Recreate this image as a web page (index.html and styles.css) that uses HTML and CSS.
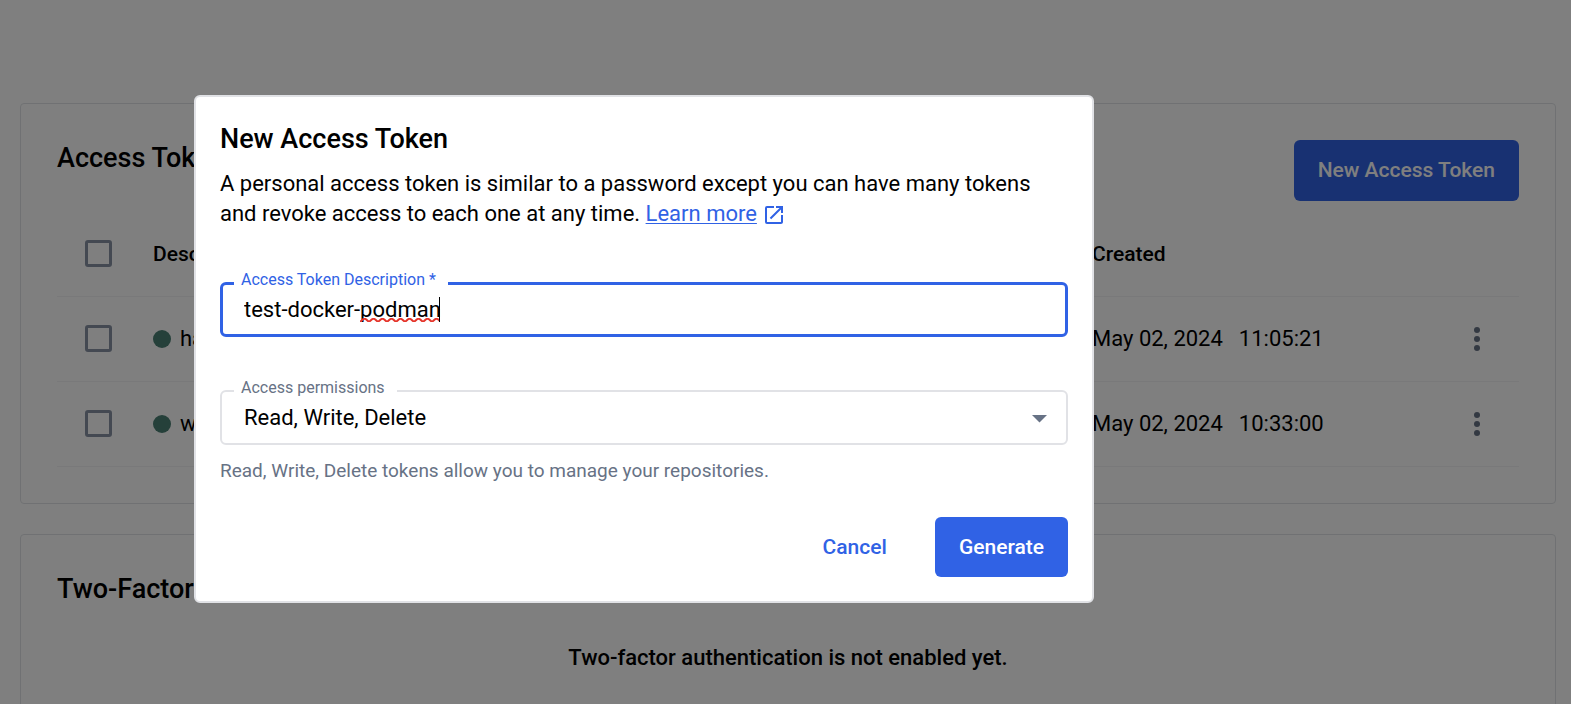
FILE: index.html
```
<!DOCTYPE html>
<html lang="en">
<head>
<meta charset="utf-8">
<title>Access Tokens</title>
<link rel="stylesheet" href="styles.css">
</head>
<body>
<main class="page">
  <section class="card">
    <header class="card-header">
      <h2 class="title">Access Tokens</h2>
      <button class="button button-primary button-new" type="button">New Access Token</button>
    </header>
    <table class="tokens">
      <colgroup><col class="col-check"><col><col class="col-created"><col class="col-menu"></colgroup>
      <thead>
        <tr>
          <th><input class="check" type="checkbox" aria-label="Select all tokens"></th>
          <th>Description</th>
          <th>Created</th>
          <th></th>
        </tr>
      </thead>
      <tbody>
        <tr>
          <td><input class="check" type="checkbox" aria-label="Select token"></td>
          <td><span class="name"><span class="dot"></span>ha</span></td>
          <td><span class="created"><span>May 02, 2024</span><span>11:05:21</span></span></td>
          <td><button class="menu" type="button" aria-label="Token actions"><svg width="6" height="24" viewBox="0 0 6 24"><circle cx="3" cy="3" r="3"/><circle cx="3" cy="12" r="3"/><circle cx="3" cy="21" r="3"/></svg></button></td>
        </tr>
        <tr>
          <td><input class="check" type="checkbox" aria-label="Select token"></td>
          <td><span class="name"><span class="dot"></span>w</span></td>
          <td><span class="created"><span>May 02, 2024</span><span>10:33:00</span></span></td>
          <td><button class="menu" type="button" aria-label="Token actions"><svg width="6" height="24" viewBox="0 0 6 24"><circle cx="3" cy="3" r="3"/><circle cx="3" cy="12" r="3"/><circle cx="3" cy="21" r="3"/></svg></button></td>
        </tr>
      </tbody>
    </table>
  </section>
  <section class="card">
    <h2 class="title">Two-Factor Authentication</h2>
    <p class="notice">Two-factor authentication is not enabled yet.</p>
  </section>
</main>

<div class="backdrop">
  <form class="dialog" role="dialog" aria-modal="true" aria-labelledby="dialog-title">
    <h2 class="dialog-title" id="dialog-title">New Access Token</h2>
    <p class="intro">A personal access token is similar to a password except you can have many tokens<br>and revoke access to each one at any time. <a class="link" href="#">Learn more</a><svg class="external" width="18" height="18" viewBox="3 3 18 18"><path d="M19 19H5V5h7V3H5a2 2 0 0 0-2 2v14a2 2 0 0 0 2 2h14c1.100 0 2-.9 2-2v-7h-2v7zM14 3v2h3.590l-9.830 9.830 1.410 1.410L19 6.410V10h2V3h-7z"/></svg></p>
    <div class="field field-active">
      <label class="label" for="description">Access Token Description *</label>
      <input class="control" id="description" type="text" value="test-docker-podman" spellcheck="false" required>
      <svg class="spelling" width="80" height="4"><defs><pattern id="wave" width="9" height="4" patternUnits="userSpaceOnUse"><path d="M0 3.500C1.500 3.500 2.500 .8 4.500 .8S7.500 3.500 9 3.500"/></pattern></defs><rect width="80" height="4" fill="url(#wave)" stroke="none"/></svg>
      <span class="caret"></span>
    </div>
    <div class="field">
      <label class="label" for="permissions">Access permissions</label>
      <select class="control" id="permissions"><option>Read, Write, Delete</option></select>
      <svg class="arrow" width="15" height="8" viewBox="0 0 15 8"><path d="M0 0h15L7.500 7.500z"/></svg>
    </div>
    <p class="helper">Read, Write, Delete tokens allow you to manage your repositories.</p>
    <div class="actions">
      <button class="button button-text" type="button">Cancel</button>
      <button class="button button-primary" type="submit">Generate</button>
    </div>
  </form>
</div>
</body>
</html>
```
FILE: styles.css
```
* {
  box-sizing: border-box;
}

html,
body {
  height: 100%;
}

body {
  margin: 0;
  overflow: hidden;
  background: #fff;
  color: #000;
  font: 400 22px/30px Roboto, "Liberation Sans", sans-serif;
}

h2,
p {
  margin: 0;
}

.page {
  display: flex;
  flex-direction: column;
  gap: 30px;
  padding: 103px 15px 0 20px;
}

.card {
  padding: 36px;
  border: 1px solid #e1e2e6;
  border-radius: 4px;
}

.card-header {
  display: flex;
  align-items: flex-start;
  justify-content: space-between;
  margin-bottom: 11px;
}

.title {
  font-size: 27px;
  line-height: 36px;
  font-weight: 500;
}

.notice {
  margin-top: 36px;
  text-align: center;
  font-weight: 500;
}

.tokens {
  width: 100%;
  border-collapse: collapse;
  table-layout: fixed;
}

.tokens th,
.tokens td {
  height: 85px;
  padding: 0;
  border-bottom: 1px solid #f2f3f5;
  text-align: left;
}

.tokens th {
  height: 84px;
  font-size: 21px;
  font-weight: 500;
}

.tokens .col-check {
  width: 96px;
}

.tokens .col-created {
  width: 343px;
}

.tokens .col-menu {
  width: 84px;
}

.check {
  display: block;
  width: 27px;
  height: 27px;
  margin: 0 0 0 28px;
  appearance: none;
  border: 3px solid #8993a5;
  border-radius: 3px;
}

.name,
.created {
  display: flex;
  align-items: center;
}

.name {
  gap: 9px;
}

.created {
  gap: 16px;
}

.dot {
  width: 18px;
  height: 18px;
  border-radius: 50%;
  background: #4a8074;
}

.menu {
  display: flex;
  margin: 0 auto;
  padding: 0;
  border: 0;
  background: none;
  fill: #677285;
}

.backdrop {
  position: fixed;
  inset: 0;
  padding: 95px 24px 24px 194px;
  background: rgba(0, 0, 0, 0.5);
}

.dialog {
  max-width: 900px;
  padding: 22px 24px 24px;
  border: 2px solid #e1e2e6;
  border-radius: 6px;
  background: #fff;
}

.dialog-title {
  font-size: 27px;
  line-height: 40px;
  font-weight: 500;
}

.intro {
  margin-top: 10px;
}

.link {
  color: #3062e5;
  text-decoration-thickness: 1px;
  text-underline-offset: 2px;
}

.external {
  margin-left: 8px;
  vertical-align: -3px;
  fill: #3062e5;
}

.field {
  position: relative;
  margin-top: 53px;
}

.label {
  position: absolute;
  top: -14px;
  left: 14px;
  padding: 0 12px 0 7px;
  background: #fff;
  color: #677285;
  font-size: 16px;
  line-height: 24px;
}

.field-active .label {
  color: #3062e5;
}

.control {
  display: block;
  width: 100%;
  height: 55px;
  padding: 0 22px;
  appearance: none;
  border: 2px solid #e1e2e6;
  border-radius: 6px;
  outline: 0;
  background: #fff;
  color: #000;
  font: inherit;
}

.field-active .control {
  padding: 0 21px;
  border: 3px solid #3062e5;
}

.spelling {
  position: absolute;
  top: 36px;
  left: 140px;
  fill: none;
  stroke: #e5352b;
  stroke-width: 2px;
}

.caret {
  position: absolute;
  top: 15px;
  left: 219px;
  width: 1px;
  height: 25px;
  background: #000;
}

.arrow {
  position: absolute;
  top: 25px;
  right: 21px;
  fill: #677285;
  pointer-events: none;
}

.helper {
  margin-top: 14px;
  color: #677285;
  font-size: 19px;
  line-height: 24px;
}

.actions {
  display: flex;
  justify-content: flex-end;
  gap: 24px;
  margin-top: 34px;
}

.button {
  height: 60px;
  padding: 0 24px;
  border: 0;
  border-radius: 6px;
  font: inherit;
  font-size: 21px;
  font-weight: 500;
}

.button-primary {
  background: #3062e5;
  color: #fff;
}

.button-new {
  height: 61px;
  padding-bottom: 2px;
}

.button-text {
  background: none;
  color: #3062e5;
}
```
